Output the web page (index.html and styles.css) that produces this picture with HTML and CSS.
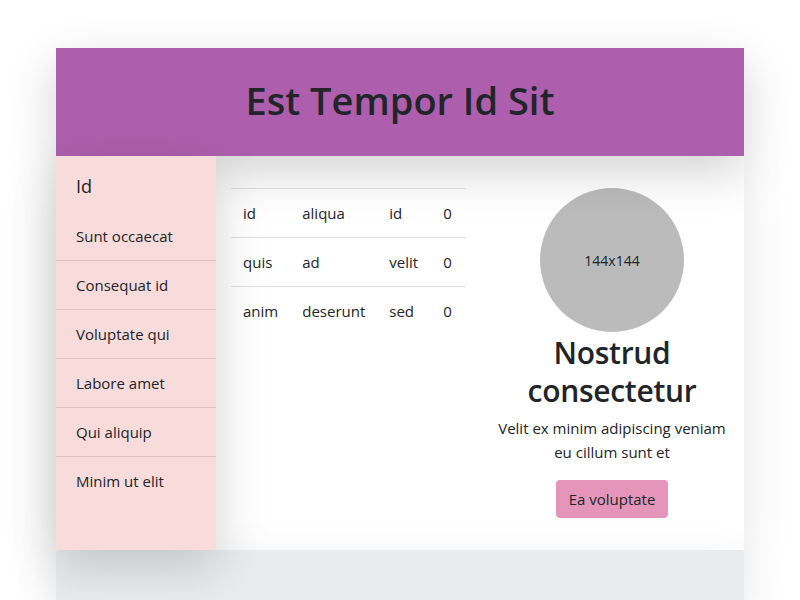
FILE: index.html
```html
<!DOCTYPE html>
<html>
<head>
<meta charset="utf-8">
<link rel="stylesheet" href="styles.css">
</head>
<body>
<div class="page">
  <header class="hero"><h1>Est Tempor Id Sit</h1></header>
  <div class="main">
    <aside class="side">
      <div class="side-title">Id</div>
      <ul class="side-list">
        <li>Sunt occaecat</li>
        <li>Consequat id</li>
        <li>Voluptate qui</li>
        <li>Labore amet</li>
        <li>Qui aliquip</li>
        <li>Minim ut elit</li>
      </ul>
    </aside>
    <section class="content">
      <div class="col-table">
        <table class="tbl">
          <tr><td>id</td><td>aliqua</td><td>id</td><td>0</td></tr>
          <tr><td>quis</td><td>ad</td><td>velit</td><td>0</td></tr>
          <tr><td>anim</td><td>deserunt</td><td>sed</td><td>0</td></tr>
        </table>
      </div>
      <div class="col-card">
        <div class="avatar">144x144</div>
        <h2>Nostrud consectetur</h2>
        <p>Velit ex minim adipiscing veniam eu cillum sunt et</p>
        <button class="btn">Ea voluptate</button>
      </div>
    </section>
  </div>
  <footer class="foot"></footer>
</div>
</body>
</html>
```
FILE: styles.css
```css
* { box-sizing: border-box; }
html, body { margin: 0; padding: 0; background: #fff; }
body {
  font-family: "Open Sans", "Noto Sans", sans-serif;
  font-size: 15px;
  color: #212529;
}
.page {
  width: 688px;
  margin: 48px auto 0;
}
.hero {
  height: 108px;
  background: #ad5fad;
  display: flex;
  align-items: center;
  justify-content: center;
  box-shadow: 0 16px 48px rgba(0,0,0,.175);
  position: relative;
  z-index: 2;
}
.hero h1 {
  margin: 0 0 4px;
  font-size: 38px;
  font-weight: 600;
  color: #212529;
}
.main {
  display: flex;
  height: 394px;
  background: #fff;
  box-shadow: 0 16px 48px rgba(0,0,0,.1);
}
.side {
  width: 160px;
  background: #f8dcdb;
  box-shadow: 0 16px 48px rgba(0,0,0,.175);
  position: relative;
  z-index: 3;
}
.side-title {
  padding: 19px 20px 0;
  font-size: 18px;
  height: 56px;
  line-height: 22px;
}
.side-list { list-style: none; margin: 0; padding: 0; }
.side-list li {
  height: 49px;
  padding: 12px 20px 0;
  border-bottom: 1px solid #dcc3c3;
  line-height: 24px;
}
.side-list li:last-child { border-bottom: none; }
.content {
  flex: 1;
  display: flex;
  padding: 32px 0 0 15px;
}
.col-table { width: 249px; }
.tbl {
  border-collapse: collapse;
  background: #fff;
}
.tbl td {
  height: 49px;
  padding: 0 12px;
  border-top: 1px solid #dee2e6;
  line-height: 24px;
}
.tbl td:first-child { width: 59px; }
.tbl td:nth-child(2) { width: 87px; }
.tbl td:nth-child(3) { width: 54px; }
.tbl td:nth-child(4) { width: 35px; }
.col-card {
  flex: 1;
  display: flex;
  flex-direction: column;
  align-items: center;
  text-align: center;
  padding: 0 16px;
}
.avatar {
  width: 144px;
  height: 144px;
  border-radius: 50%;
  background: #bbbbbb;
  display: flex;
  align-items: center;
  justify-content: center;
  font-size: 14px;
  color: #212529;
}
.col-card h2 {
  margin: 2px 0 0;
  font-size: 30px;
  font-weight: 600;
  line-height: 38px;
  letter-spacing: -0.3px;
}
.col-card p {
  margin: 6px 0 0;
  line-height: 24px;
  font-size: 15px;
}
.btn {
  margin-top: 16px;
  height: 38px;
  padding: 0 13px;
  background: #e495b9;
  border: none;
  border-radius: 4px;
  font: inherit;
  color: #212529;
}
.foot {
  height: 60px;
  background: #e9ecef;
  border-radius: 4px 4px 0 0;
  box-shadow: 0 16px 48px rgba(0,0,0,.1);
}
```
